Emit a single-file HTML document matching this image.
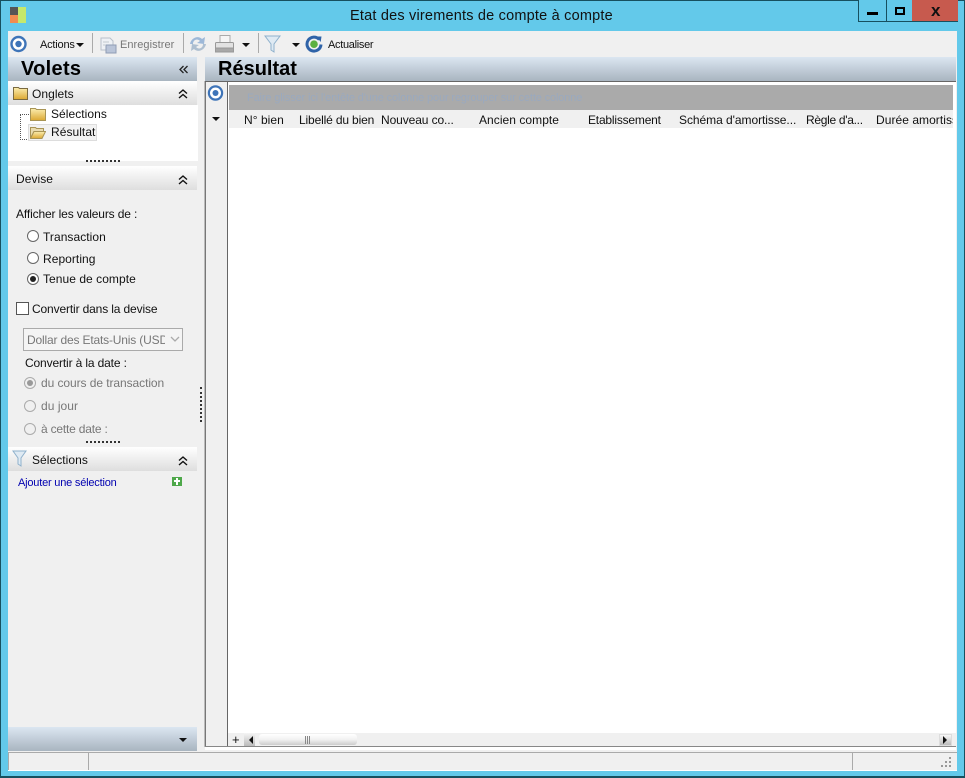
<!DOCTYPE html>
<html lang="fr"><head><meta charset="utf-8"><title>Etat des virements de compte à compte</title>
<style>
html,body{margin:0;padding:0}
body{width:965px;height:778px;overflow:hidden;position:relative;background:#63c9ea;font-family:"Liberation Sans",sans-serif;font-size:12px;color:#111}
.a{position:absolute}
.t{position:absolute;white-space:nowrap;line-height:14px;letter-spacing:.05px}
.g{color:#777}
.bar{background:linear-gradient(#dbe6f1,#a9b5c0)}
.sec{position:absolute;left:8px;width:189px;height:24px;background:linear-gradient(#fff,#dedede)}
.sep{position:absolute;width:1px;height:20px;background:#aaa;top:33px}
.dots{position:absolute;height:2px;border-top:2px dotted #333}
.rad{position:absolute;width:10px;height:10px;border:1px solid #666;border-radius:50%;background:#fff}
.rad.d{border-color:#aaa;background:#f0f0f0}
.rad i{position:absolute;left:2px;top:2px;width:6px;height:6px;border-radius:50%;background:#222}
.rad.d i{background:#999}
.tri{position:absolute;width:0;height:0;border-left:4px solid transparent;border-right:4px solid transparent;border-top:4px solid #111}
</style></head><body>
<svg width="0" height="0" style="position:absolute"><defs><linearGradient id="f" x1="0" y1="0" x2="0" y2="1"><stop offset="0" stop-color="#fbeeb0"/><stop offset="1" stop-color="#dca832"/></linearGradient></defs></svg>
<div class="a" style="left:0;top:0;width:965px;height:778px;box-sizing:border-box;border:1px solid #17505f;border-bottom-width:2px"></div>
<!-- app icon -->
<div class="a" style="left:10px;top:7px;width:8px;height:8px;background:#555"></div>
<div class="a" style="left:10px;top:15px;width:8px;height:8px;background:#f08c50"></div>
<div class="a" style="left:18px;top:7px;width:8px;height:16px;background:#c5e86c"></div>
<div class="t" style="left:350px;top:7px;font-size:14.5px;line-height:18px;letter-spacing:.2px;color:#111">Etat des virements de compte à compte</div>
<!-- window controls -->
<div class="a" style="left:858px;top:0;width:100px;height:22px;box-sizing:border-box;border:1px solid #17505f;border-top:0;background:#63c9ea"></div>
<div class="a" style="left:886px;top:0;width:1px;height:21px;background:#17505f"></div>
<div class="a" style="left:912px;top:0;width:46px;height:22px;background:#c75a4e;border-bottom:1px solid #17505f;box-sizing:border-box"></div>
<div class="a" style="left:867px;top:12px;width:11px;height:3px;background:#000"></div>
<div class="a" style="left:895px;top:7px;width:10px;height:8px;box-sizing:border-box;border:2px solid #000"></div>
<div class="t" style="left:931px;top:2px;font-size:17px;line-height:18px;font-weight:bold;color:#111">x</div>
<!-- client -->
<div class="a" style="left:8px;top:31px;width:949px;height:739px;background:#f0f0f0"></div>
<!-- toolbar -->
<svg class="a" style="left:10px;top:35px" width="18" height="18"><circle cx="8.5" cy="9" r="7" fill="#fff" stroke="#3e74b8" stroke-width="2.4"/><circle cx="8.5" cy="9" r="3.2" fill="#3e74b8"/></svg>
<div class="t" style="left:40px;top:38px;font-size:11px;letter-spacing:-.2px">Actions</div>
<div class="tri" style="left:76px;top:43px"></div>
<div class="sep" style="left:92px"></div>
<svg class="a" style="left:100px;top:37px" width="17" height="17"><path d="M1 1h9l3 3v9H1z" fill="#eef1f5" stroke="#b8c0ca"/><rect x="6" y="8" width="10" height="8" fill="#b9c4d8" stroke="#8f9db5"/><path d="M3 5h6M3 8h3" stroke="#c3c9d0"/></svg>
<div class="t g" style="left:120px;top:38px;font-size:11px">Enregistrer</div>
<div class="sep" style="left:183px"></div>
<svg class="a" style="left:189px;top:35px" width="18" height="18"><path d="M1 9C2 3 9 0 13 4l3-2-1 7-7-1 3-2C8 3 4 5 4 9z" fill="#9db8d8"/><path d="M17 9c-1 6-8 9-12 5l-3 2 1-7 7 1-3 2c3 3 7 1 7-3z" fill="#aebfd0"/></svg>
<svg class="a" style="left:215px;top:34px" width="20" height="20"><rect x="5" y="1.5" width="10" height="7" fill="#f5f5f5" stroke="#aaa"/><rect x=".5" y="8.5" width="18" height="6" rx="1" fill="#e2e2e2" stroke="#999"/><rect x=".5" y="14" width="18" height="4" fill="#a8a8a8" stroke="#999"/></svg>
<div class="tri" style="left:242px;top:43px"></div>
<div class="sep" style="left:258px"></div>
<svg class="a" style="left:264px;top:34px" width="18" height="20"><path d="M1 2h15L10 10v8L7 16v-6z" fill="#dfeaf3" stroke="#8fb1cc"/></svg>
<div class="tri" style="left:292px;top:43px"></div>
<svg class="a" style="left:305px;top:35px" width="18" height="18"><path d="M14.3 4.5A7 7 0 1 0 16 9.5" fill="none" stroke="#2f63a8" stroke-width="3"/><path d="M11.5 1.5l5 0-.8 5.5z" fill="#2f63a8"/><circle cx="9" cy="9.2" r="3.8" fill="#5cb040"/></svg>
<div class="t" style="left:328px;top:38px;font-size:11px;letter-spacing:-.3px">Actualiser</div>
<!-- headers -->
<div class="a bar" style="left:8px;top:57px;width:189px;height:24px"></div>
<div class="t" style="left:21px;top:58px;font-size:20px;line-height:22px;font-weight:bold;letter-spacing:.3px;color:#000">Volets</div>
<svg class="a" style="left:179px;top:65px" width="10" height="9" fill="none" stroke="#222" stroke-width="1.3"><path d="M4.5 1L1 4.5 4.5 8M8.5 1L5 4.5 8.5 8"/></svg>
<div class="a bar" style="left:205px;top:57px;width:751px;height:24px"></div>
<div class="t" style="left:218px;top:58px;font-size:20px;line-height:22px;font-weight:bold;letter-spacing:0;color:#000">Résultat</div>
<!-- Onglets -->
<div class="sec" style="top:81px"></div>
<svg class="a" style="left:13px;top:86px" width="15" height="14"><path d="M.5 1.5h5l1 1h8v11H.5z" fill="url(#f)" stroke="#7a6a40"/></svg>
<div class="t" style="left:32px;top:87px">Onglets</div>
<svg class="a" style="left:178px;top:89px" width="10" height="10" fill="none" stroke="#111" stroke-width="1.4"><path d="M1 4.5L5 1l4 3.5M1 9L5 5.5 9 9"/></svg>
<div class="a" style="left:8px;top:105px;width:190px;height:56px;background:#fff"></div>
<div class="a" style="left:20px;top:114px;height:26px;width:9px;border-left:1px dotted #555;border-top:1px dotted #555;border-bottom:1px dotted #555;box-sizing:border-box"></div>
<svg class="a" style="left:30px;top:107px" width="16" height="14"><path d="M.5 1.5h5l1 1h9v11H.5z" fill="url(#f)" stroke="#a89455"/></svg>
<div class="t" style="left:51px;top:107px">Sélections</div>
<div class="a" style="left:28px;top:124px;width:69px;height:17px;background:#f2f2f2;border:1px solid #ddd;box-sizing:border-box"></div>
<svg class="a" style="left:30px;top:126px" width="16" height="13"><path d="M.5 1.5h5l1 1h7v3H4L.5 12z" fill="#e9dcb0" stroke="#a89455"/><path d="M4 5.5h11.5L12 12.5H.5z" fill="url(#f)" stroke="#a89455"/></svg>
<div class="t" style="left:51px;top:125px">Résultat</div>
<div class="dots" style="left:86px;top:160px;width:34px"></div>
<!-- Devise -->
<div class="sec" style="top:166px"></div>
<div class="t" style="left:16px;top:172px">Devise</div>
<svg class="a" style="left:178px;top:175px" width="10" height="10" fill="none" stroke="#111" stroke-width="1.4"><path d="M1 4.5L5 1l4 3.5M1 9L5 5.5 9 9"/></svg>
<div class="t" style="left:16px;top:207px;letter-spacing:-.13px">Afficher les valeurs de :</div>
<div class="rad" style="left:27px;top:230px"></div><div class="t" style="left:43px;top:230px">Transaction</div>
<div class="rad" style="left:27px;top:252px"></div><div class="t" style="left:43px;top:252px">Reporting</div>
<div class="rad" style="left:27px;top:273px"><i></i></div><div class="t" style="left:43px;top:272px">Tenue de compte</div>
<div class="a" style="left:16px;top:302px;width:13px;height:13px;box-sizing:border-box;border:1px solid #555;background:#fff"></div>
<div class="t" style="left:32px;top:302px;letter-spacing:-.14px">Convertir dans la devise</div>
<div class="a" style="left:23px;top:328px;width:160px;height:23px;box-sizing:border-box;border:1px solid #aaa;background:#f4f4f4"></div>
<div class="t g" style="left:27px;top:333px;width:138px;overflow:hidden;letter-spacing:-.17px">Dollar des Etats-Unis (USD)</div>
<svg class="a" style="left:170px;top:336px" width="10" height="7"><path d="M1 1l4 4 4-4" fill="none" stroke="#aaa" stroke-width="1.3"/></svg>
<div class="t" style="left:25px;top:356px;letter-spacing:-.14px">Convertir à la date :</div>
<div class="rad d" style="left:24px;top:377px"><i></i></div><div class="t g" style="left:41px;top:376px;letter-spacing:-.07px">du cours de transaction</div>
<div class="rad d" style="left:24px;top:400px"></div><div class="t g" style="left:41px;top:399px">du jour</div>
<div class="rad d" style="left:24px;top:423px"></div><div class="t g" style="left:41px;top:422px;letter-spacing:-.2px">à cette date :</div>
<div class="dots" style="left:86px;top:441px;width:34px"></div>
<!-- Sélections -->
<div class="sec" style="top:447px"></div>
<svg class="a" style="left:12px;top:450px" width="16" height="18"><path d="M1 1h13L9 8v8L6 14V8z" fill="#dfeaf3" stroke="#8fb1cc"/></svg>
<div class="t" style="left:32px;top:453px">Sélections</div>
<svg class="a" style="left:178px;top:456px" width="10" height="10" fill="none" stroke="#111" stroke-width="1.4"><path d="M1 4.5L5 1l4 3.5M1 9L5 5.5 9 9"/></svg>
<div class="t" style="left:18px;top:476px;color:#0000b0;font-size:11px;letter-spacing:-.2px">Ajouter une sélection</div>
<div class="a" style="left:172px;top:477px;width:10px;height:9px;background:#4ea84a"></div>
<div class="a" style="left:176px;top:478px;width:2px;height:7px;background:#fff"></div>
<div class="a" style="left:174px;top:480px;width:6px;height:2px;background:#fff"></div>
<div class="a bar" style="left:8px;top:727px;width:189px;height:24px"></div>
<div class="tri" style="left:179px;top:738px"></div>
<!-- splitter -->
<div class="a" style="left:200px;top:387px;width:2px;height:35px;border-left:2px dotted #333;box-sizing:border-box"></div>
<!-- grid -->
<div class="a" style="left:204px;top:81px;width:1px;height:666px;background:#bbb"></div>
<div class="a" style="left:205px;top:81px;width:1px;height:666px;background:#777"></div>
<div class="a" style="left:205px;top:81px;width:751px;height:1px;background:#666"></div>
<div class="a" style="left:205px;top:746px;width:751px;height:1px;background:#888"></div>
<div class="a" style="left:206px;top:82px;width:750px;height:3px;background:#fff"></div>
<div class="a" style="left:205px;top:747px;width:751px;height:3px;background:#fff"></div>
<div class="a" style="left:206px;top:82px;width:21px;height:664px;background:#f0f0f0"></div>
<div class="a" style="left:227px;top:82px;width:1px;height:664px;background:#666"></div>
<div class="a" style="left:228px;top:85px;width:728px;height:661px;background:#fff"></div>
<div class="a" style="left:229px;top:85px;width:724px;height:25px;background:#aaa"></div>
<div class="t" style="left:247px;top:91px;font-size:11px;color:#9aa9bf;letter-spacing:-.14px">Faire glisser ici l'entête d'une colonne pour regrouper sur cette colonne</div>
<svg class="a" style="left:207px;top:84px" width="18" height="18"><circle cx="8.5" cy="9" r="6.6" fill="#fff" stroke="#3e74b8" stroke-width="2.2"/><circle cx="8.5" cy="9" r="3" fill="#3e74b8"/></svg>
<div class="tri" style="left:212px;top:117px"></div>
<div class="a" style="left:229px;top:110px;width:724px;height:18px;background:#f0f0f0;overflow:hidden">
<div class="t" style="left:15px;top:3px">N° bien</div>
<div class="t" style="left:70px;top:3px;letter-spacing:-.15px">Libellé du bien</div>
<div class="t" style="left:152px;top:3px;letter-spacing:-.1px">Nouveau co...</div>
<div class="t" style="left:250px;top:3px">Ancien compte</div>
<div class="t" style="left:359px;top:3px;letter-spacing:-.2px">Etablissement</div>
<div class="t" style="left:450px;top:3px;letter-spacing:-.05px">Schéma d'amortisse...</div>
<div class="t" style="left:577px;top:3px;letter-spacing:-.3px">Règle d'a...</div>
<div class="t" style="left:647px;top:3px">Durée amortissement</div>
</div>
<!-- scrollbar -->
<div class="a" style="left:228px;top:733px;width:728px;height:13px;background:#f0f0f0"></div>
<div class="t" style="left:232px;top:733px;font-size:13px;line-height:14px;color:#111">+</div>
<div class="a" style="left:244px;top:733px;width:11px;height:13px;background:linear-gradient(#f5f5f5,#bbb)"></div>
<div class="a" style="left:249px;top:736px;border:4px solid transparent;border-right:4px solid #111;border-left:0"></div>
<div class="a" style="left:259px;top:734px;width:98px;height:11px;border-radius:3px;background:linear-gradient(#fff,#f2f2f2 50%,#ccc)"></div>
<div class="a" style="left:305px;top:736px;width:5px;height:8px;border-left:1px solid #888;border-right:1px solid #888;box-sizing:border-box"></div>
<div class="a" style="left:307px;top:736px;width:1px;height:8px;background:#888"></div>
<div class="a" style="left:939px;top:734px;width:13px;height:12px;background:linear-gradient(#f8f8f8,#bbb);border:1px solid #ddd;box-sizing:border-box"></div>
<div class="a" style="left:943px;top:736px;border:4px solid transparent;border-left:4px solid #111;border-right:0"></div>
<!-- status -->
<div class="a" style="left:8px;top:752px;width:949px;height:19px;background:#f0f0f0;box-sizing:border-box;border-top:1px solid #aaa;border-bottom:1px solid #fff"></div>
<div class="a" style="left:8px;top:753px;width:1px;height:17px;background:#aaa"></div>
<div class="a" style="left:88px;top:753px;width:1px;height:17px;background:#aaa"></div>
<div class="a" style="left:852px;top:753px;width:1px;height:17px;background:#aaa"></div>
<svg class="a" style="left:941px;top:757px" width="12" height="12" fill="#999"><rect x="8" y="0" width="2" height="2"/><rect x="4" y="4" width="2" height="2"/><rect x="8" y="4" width="2" height="2"/><rect x="0" y="8" width="2" height="2"/><rect x="4" y="8" width="2" height="2"/><rect x="8" y="8" width="2" height="2"/></svg>
</body></html>
